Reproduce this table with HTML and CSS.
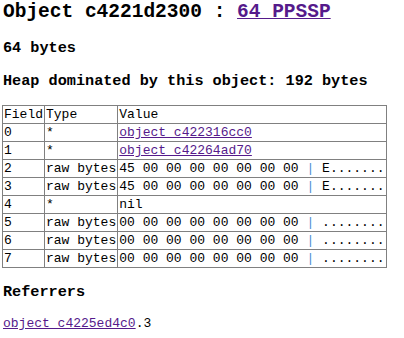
FILE: index.html
```html
<!DOCTYPE html>
<html>
<head>
<meta charset="utf-8">
<title>Object c4221d2300</title>
<link rel="stylesheet" href="styles.css">
</head>
<body>
<h2 class="title">Object c4221d2300 : <a class="link" href="#">64_PPSSP</a></h2>
<h3 class="sub">64 bytes</h3>
<h3 class="sub">Heap dominated by this object: 192 bytes</h3>
<table class="fields">
<tr><td>Field</td><td>Type</td><td>Value</td></tr>
<tr><td>0</td><td>*</td><td><a class="link" href="#">object c422316cc0</a></td></tr>
<tr><td>1</td><td>*</td><td><a class="link" href="#">object c42264ad70</a></td></tr>
<tr><td>2</td><td>raw bytes</td><td>45 00 00 00 00 00 00 00 <span class="sep">|</span> E.......</td></tr>
<tr><td>3</td><td>raw bytes</td><td>45 00 00 00 00 00 00 00 <span class="sep">|</span> E.......</td></tr>
<tr><td>4</td><td>*</td><td>nil</td></tr>
<tr><td>5</td><td>raw bytes</td><td>00 00 00 00 00 00 00 00 <span class="sep">|</span> ........</td></tr>
<tr><td>6</td><td>raw bytes</td><td>00 00 00 00 00 00 00 00 <span class="sep">|</span> ........</td></tr>
<tr><td>7</td><td>raw bytes</td><td>00 00 00 00 00 00 00 00 <span class="sep">|</span> ........</td></tr>
</table>
<h3 class="sub">Referrers</h3>
<p class="refs"><a class="link" href="#">object c4225ed4c0</a>.3</p>
</body>
</html>
```
FILE: styles.css
```css
html, body {
  background: #ffffff;
}
body {
  margin: 0 0 0 2px;
  font-family: "Liberation Mono", "Courier New", monospace;
  font-size: 13px;
  color: #000000;
}
.title {
  font-size: 19.5px;
  font-weight: bold;
  margin: 1px 0 16px 1px;
}
.sub {
  font-size: 15.2px;
  font-weight: bold;
  margin: 15px 0 15px 1px;
}
.link {
  color: #551a8b;
  text-decoration: underline;
}
.fields {
  border-collapse: collapse;
  border: 1px solid #808080;
}
.fields td {
  border: 1px solid #808080;
  padding: 1px;
  white-space: pre;
  vertical-align: top;
}
.sep {
  color: #4a8fd4;
}
.refs {
  margin: 13px 0 0 1px;
}
```
